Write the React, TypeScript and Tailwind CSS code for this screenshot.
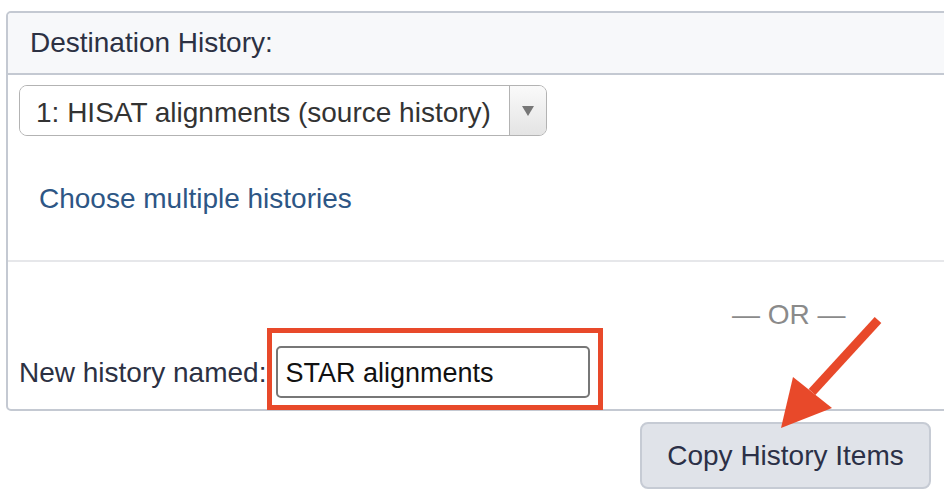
import React from "react";

export default function App() {
  const font = { fontFamily: '"Liberation Sans", Arial, sans-serif' };
  return (
    <div className="relative w-[944px] h-[504px] overflow-hidden bg-white" style={font}>
      <div className="pt-[11px] pl-[6px]">
        {/* Card */}
        <div className="w-[980px] border-2 border-[#c4c9d2] rounded-[5px] bg-white">
          <div className="h-[62px] bg-[#f7f8fa] border-b-2 border-[#c4c9d2] rounded-t-[4px] flex items-center pl-[22px]">
            <span className="text-[28px] leading-[34px] text-[#2c3143]">Destination History:</span>
          </div>
          <div className="h-[185px] pt-[10px] pl-[11px] flex flex-col">
            <div className="w-[528px] h-[51px] flex border-[1.5px] border-[#b3b3b3] rounded-[8px] bg-gradient-to-b from-white to-[#f3f3f3] overflow-hidden">
              <div className="flex-1 flex items-center pl-[16px] pt-[5px] text-[28px] leading-[34px] text-[#333] bg-white">
                1: HISAT alignments (source history)
              </div>
              <div className="w-[37px] border-l-[1.5px] border-[#b3b3b3] flex items-center justify-center bg-gradient-to-b from-[#fafafa] to-[#e4e4e4]">
                <svg width="12" height="10" viewBox="0 0 12 10">
                  <polygon points="0,0 12,0 6,10" fill="#777" />
                </svg>
              </div>
            </div>
            <div className="mt-[46px] pl-[20px] text-[28px] leading-[34px] text-[#2d5685]">Choose multiple histories</div>
          </div>
          <div className="h-[2px] bg-[#e6e7ea]" />
          <div className="h-[147px] pt-[36px]">
            <div className="pl-[724px] text-[28px] leading-[34px] text-[#8a8a8a]">— OR —</div>
            <div className="mt-[14px] pl-[11px] flex items-center">
              <span className="text-[28px] leading-[34px] text-[#2c3143] pt-[1px]">New history named:</span>
              <div className="relative ml-[10px]">
                <div className="absolute -top-[18px] -left-[9px] -right-[13px] -bottom-[12px] border-[5px] border-[#e8492a]" />
                <div className="w-[314px] h-[52px] border-2 border-[#777] rounded-[5px] flex items-center pl-[7px] pt-[2px] text-[27px] leading-[34px] text-[#111] bg-white">
                  STAR alignments
                </div>
              </div>
            </div>
          </div>
        </div>
      </div>
      <div className="flex justify-end pr-[13px] mt-[11px]">
        <div className="w-[291px] h-[67px] bg-[#e0e3e9] border-2 border-[#c6cbd4] rounded-[8px] flex items-center justify-center pt-[1px] text-[28px] leading-[34px] text-[#2b3047]">
          Copy History Items
        </div>
      </div>
      <svg className="absolute left-0 top-0 pointer-events-none" width="944" height="504" viewBox="0 0 944 504">
        <line x1="878" y1="320" x2="812" y2="392" stroke="#e8492a" strokeWidth="9" />
        <polygon points="781,428 793,377 832,408" fill="#e8492a" />
      </svg>
    </div>
  );
}
